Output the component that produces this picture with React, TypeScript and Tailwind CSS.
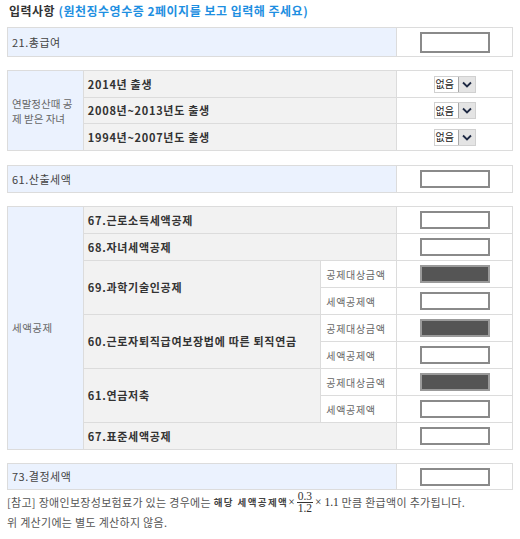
import React from 'react';

const FONT = { fontFamily: '"Noto Sans CJK KR", "Noto Sans", sans-serif' };

function Box({ dark = false, tall = false }: { dark?: boolean; tall?: boolean }) {
  return (
    <div
      className={`mx-auto w-[70px] ${tall ? 'h-[21px]' : 'h-[18px]'} border-2 ${
        dark ? 'bg-[#555555] border-[#9a9a9a]' : 'bg-white border-[#8a8a8a]'
      }`}
    />
  );
}

function Pick() {
  return (
    <div className="mx-auto flex h-[17px] w-[42px] items-center border border-[#d0d0d0] bg-white">
      <span className="flex-1 pl-[1px] text-[10px] leading-none text-[#222]">없음</span>
      <span className="flex h-full w-[17px] items-center justify-center border-l border-[#a9a9a9] bg-[#e4e4e4]">
        <svg width="10" height="7" viewBox="0 0 10 7">
          <path d="M1 1.5 L5 5.5 L9 1.5" fill="none" stroke="#1f2a44" strokeWidth="1.8" />
        </svg>
      </span>
    </div>
  );
}

const cell = 'border border-[#dcdcdc]';
const bold = `${cell} bg-[#f2f2f2] pl-[4px] text-[11px] font-bold tracking-[0.7px] text-[#333]`;
const plain = `${cell} bg-[#ebf2fe] pl-[4px] text-[11px] tracking-[0.5px]`;
const small = `${cell} pl-[5px] text-[10px] tracking-[0.7px] text-[#666]`;

export default function App() {
  const deductions = ['69.과학기술인공제', '60.근로자퇴직급여보장법에 따른 퇴직연금', '61.연금저축'];

  return (
    <div className="min-h-screen bg-white px-[7px] pt-[3px] text-[#444]" style={FONT}>
      <h2 className="pl-[2px] text-[12px] font-bold leading-[16px] tracking-[0.5px] text-[#333]">
        입력사항 <span className="text-[#1e8fe1]">(원천징수영수증 2페이지를 보고 입력해 주세요)</span>
      </h2>

      {/* 21 */}
      <table className="mt-[8px] w-[506px] border-collapse">
        <colgroup>
          <col className="w-[390px]" />
          <col className="w-[116px]" />
        </colgroup>
        <tbody>
          <tr className="h-[29px]">
            <td className={plain}>21.총급여</td>
            <td className={cell}><Box tall /></td>
          </tr>
        </tbody>
      </table>

      {/* 자녀 */}
      <table className="mt-[13px] w-[506px] border-collapse">
        <colgroup>
          <col className="w-[76px]" />
          <col className="w-[314px]" />
          <col className="w-[116px]" />
        </colgroup>
        <tbody>
          <tr className="h-[27px]">
            <td rowSpan={3} className={`${cell} bg-[#ebf2fe] pl-[4px] text-[10.5px] leading-[15px] text-[#666]`}>
              연말정산때 공<br />제 받은 자녀
            </td>
            <td className={bold}>2014년 출생</td>
            <td className={cell}><Pick /></td>
          </tr>
          <tr className="h-[26px]">
            <td className={bold}>2008년~2013년도 출생</td>
            <td className={cell}><Pick /></td>
          </tr>
          <tr className="h-[27px]">
            <td className={bold}>1994년~2007년도 출생</td>
            <td className={cell}><Pick /></td>
          </tr>
        </tbody>
      </table>

      {/* 61 */}
      <table className="mt-[14px] w-[506px] border-collapse">
        <colgroup>
          <col className="w-[390px]" />
          <col className="w-[116px]" />
        </colgroup>
        <tbody>
          <tr className="h-[27px]">
            <td className={plain}>61.산출세액</td>
            <td className={cell}><Box /></td>
          </tr>
        </tbody>
      </table>

      {/* 세액공제 */}
      <table className="mt-[13px] w-[506px] border-collapse">
        <colgroup>
          <col className="w-[76px]" />
          <col className="w-[238px]" />
          <col className="w-[76px]" />
          <col className="w-[116px]" />
        </colgroup>
        <tbody>
          <tr className="h-[27px]">
            <td rowSpan={9} className={`${cell} bg-[#ebf2fe] pl-[4px] text-[10.5px] tracking-[0.5px] text-[#666]`}>세액공제</td>
            <td colSpan={2} className={bold}>67.근로소득세액공제</td>
            <td className={cell}><Box /></td>
          </tr>
          <tr className="h-[27px]">
            <td colSpan={2} className={bold}>68.자녀세액공제</td>
            <td className={cell}><Box /></td>
          </tr>
          {deductions.map((title) => (
            <React.Fragment key={title}>
              <tr className="h-[27px]">
                <td rowSpan={2} className={bold}>{title}</td>
                <td className={small}>공제대상금액</td>
                <td className={cell}><Box dark /></td>
              </tr>
              <tr className="h-[27px]">
                <td className={small}>세액공제액</td>
                <td className={cell}><Box /></td>
              </tr>
            </React.Fragment>
          ))}
          <tr className="h-[27px]">
            <td colSpan={2} className={bold}>67.표준세액공제</td>
            <td className={cell}><Box /></td>
          </tr>
        </tbody>
      </table>

      {/* 73 */}
      <table className="mt-[13px] w-[506px] border-collapse">
        <colgroup>
          <col className="w-[390px]" />
          <col className="w-[116px]" />
        </colgroup>
        <tbody>
          <tr className="h-[26px]">
            <td className={plain}>73.결정세액</td>
            <td className={cell}><Box /></td>
          </tr>
        </tbody>
      </table>

      <div className="mt-[1px] text-[11px] leading-[17px] tracking-[0.3px] text-[#555]">
        <p className="flex items-center whitespace-nowrap">
          [참고] 장애인보장성보험료가 있는 경우에는&nbsp;
          <span className="text-[9.5px] font-bold tracking-[1.4px] text-[#444]">해당 세액공제액</span>
          <span
            className="inline-flex items-center text-[11.5px] tracking-normal text-[#333]"
            style={{ fontFamily: '"Liberation Serif", serif' }}
          >
            ×
            <span className="mx-[2px] inline-flex flex-col items-center leading-[11px]">
              <span className="border-b border-[#333] px-[1px]">0.3</span>
              <span>1.2</span>
            </span>
            × 1.1
          </span>
          &nbsp;만큼 환급액이 추가됩니다.
        </p>
        <p>위 계산기에는 별도 계산하지 않음.</p>
      </div>
    </div>
  );
}
